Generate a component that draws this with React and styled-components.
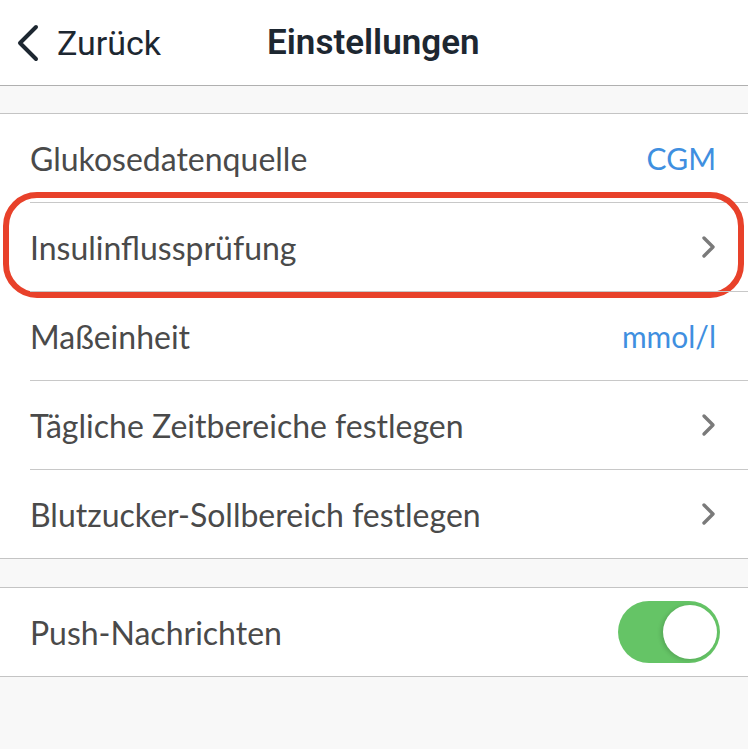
import React from 'react'
import styled, { createGlobalStyle } from 'styled-components'

const Global = createGlobalStyle`
  html, body {
    margin: 0;
    padding: 0;
    background: #f8f8f8;
  }
  body {
    font-family: Lato, "Noto Sans", sans-serif;
  }
`

const Page = styled.div`
  width: 748px;
  min-height: 749px;
  background: #f8f8f8;
`

const Header = styled.header`
  height: 85px;
  background: #fff;
  border-bottom: 1px solid #b0b0b0;
  display: flex;
  align-items: center;
  font-family: Roboto, "Noto Sans", sans-serif;
  color: #1d2731;
`

const Back = styled.div`
  display: flex;
  align-items: center;
  gap: 16px;
  padding-left: 15px;
  font-size: 34px;
  font-weight: 400;
  width: 252px;
`

const Title = styled.h1`
  margin: 0;
  font-size: 35px;
  font-weight: 600;
`

const Spacer = styled.div`
  height: ${(p) => p.h}px;
`

const Group = styled.section`
  background: #fff;
  border-top: 1px solid #c4c4c4;
  border-bottom: 1px solid #c4c4c4;
`

const Row = styled.div`
  position: relative;
  height: 88px;
  margin-left: 30px;
  padding-right: 30px;
  display: flex;
  align-items: center;
  justify-content: space-between;
  border-top: ${(p) => (p.first ? 'none' : '1px solid #c8c8c8')};
`

const Label = styled.span`
  font-size: 32px;
  color: #4a4a4a;
`

const Value = styled.span`
  font-size: 30px;
  color: #3f8fe0;
  margin-right: 2px;
`

const Highlight = styled.div`
  position: absolute;
  left: -27px;
  right: 4px;
  top: -11px;
  bottom: -7px;
  border: 6px solid #e8412a;
  border-radius: 34px;
  pointer-events: none;
`

const Toggle = styled.div`
  width: 102px;
  height: 62px;
  border-radius: 31px;
  background: #65c466;
  display: flex;
  align-items: center;
  justify-content: flex-end;
  padding: 0 3px;
  box-sizing: border-box;
  margin-right: -2px;
`

const Knob = styled.div`
  width: 54px;
  height: 54px;
  border-radius: 50%;
  background: #fff;
  box-shadow: -2px 1px 4px rgba(0, 0, 0, 0.15);
`

const Chevron = () => (
  <svg width="18" height="26" viewBox="0 0 18 26">
    <path d="M4 4 L13 13 L4 22" fill="none" stroke="#7a7a7a" strokeWidth="3.4" strokeLinecap="round" strokeLinejoin="round" />
  </svg>
)

const BackArrow = () => (
  <svg width="26" height="38" viewBox="0 0 26 38">
    <path d="M21 3 L5 19 L21 35" fill="none" stroke="#1d2731" strokeWidth="4" strokeLinecap="round" strokeLinejoin="round" />
  </svg>
)

const rows = [
  { label: 'Glukosedatenquelle', value: 'CGM' },
  { label: 'Insulinflussprüfung', highlight: true },
  { label: 'Maßeinheit', value: 'mmol/l' },
  { label: 'Tägliche Zeitbereiche festlegen' },
  { label: 'Blutzucker-Sollbereich festlegen' },
]

export default function App() {
  return (
    <Page>
      <Global />
      <Header>
        <Back>
          <BackArrow />
          <span>Zurück</span>
        </Back>
        <Title>Einstellungen</Title>
      </Header>
      <Spacer h={27} />
      <Group>
        {rows.map((r, i) => (
          <Row key={r.label} first={i === 0}>
            <Label>{r.label}</Label>
            {r.value ? <Value>{r.value}</Value> : <Chevron />}
            {r.highlight && <Highlight />}
          </Row>
        ))}
      </Group>
      <Spacer h={28} />
      <Group>
        <Row first>
          <Label>Push-Nachrichten</Label>
          <Toggle>
            <Knob />
          </Toggle>
        </Row>
      </Group>
    </Page>
  )
}
